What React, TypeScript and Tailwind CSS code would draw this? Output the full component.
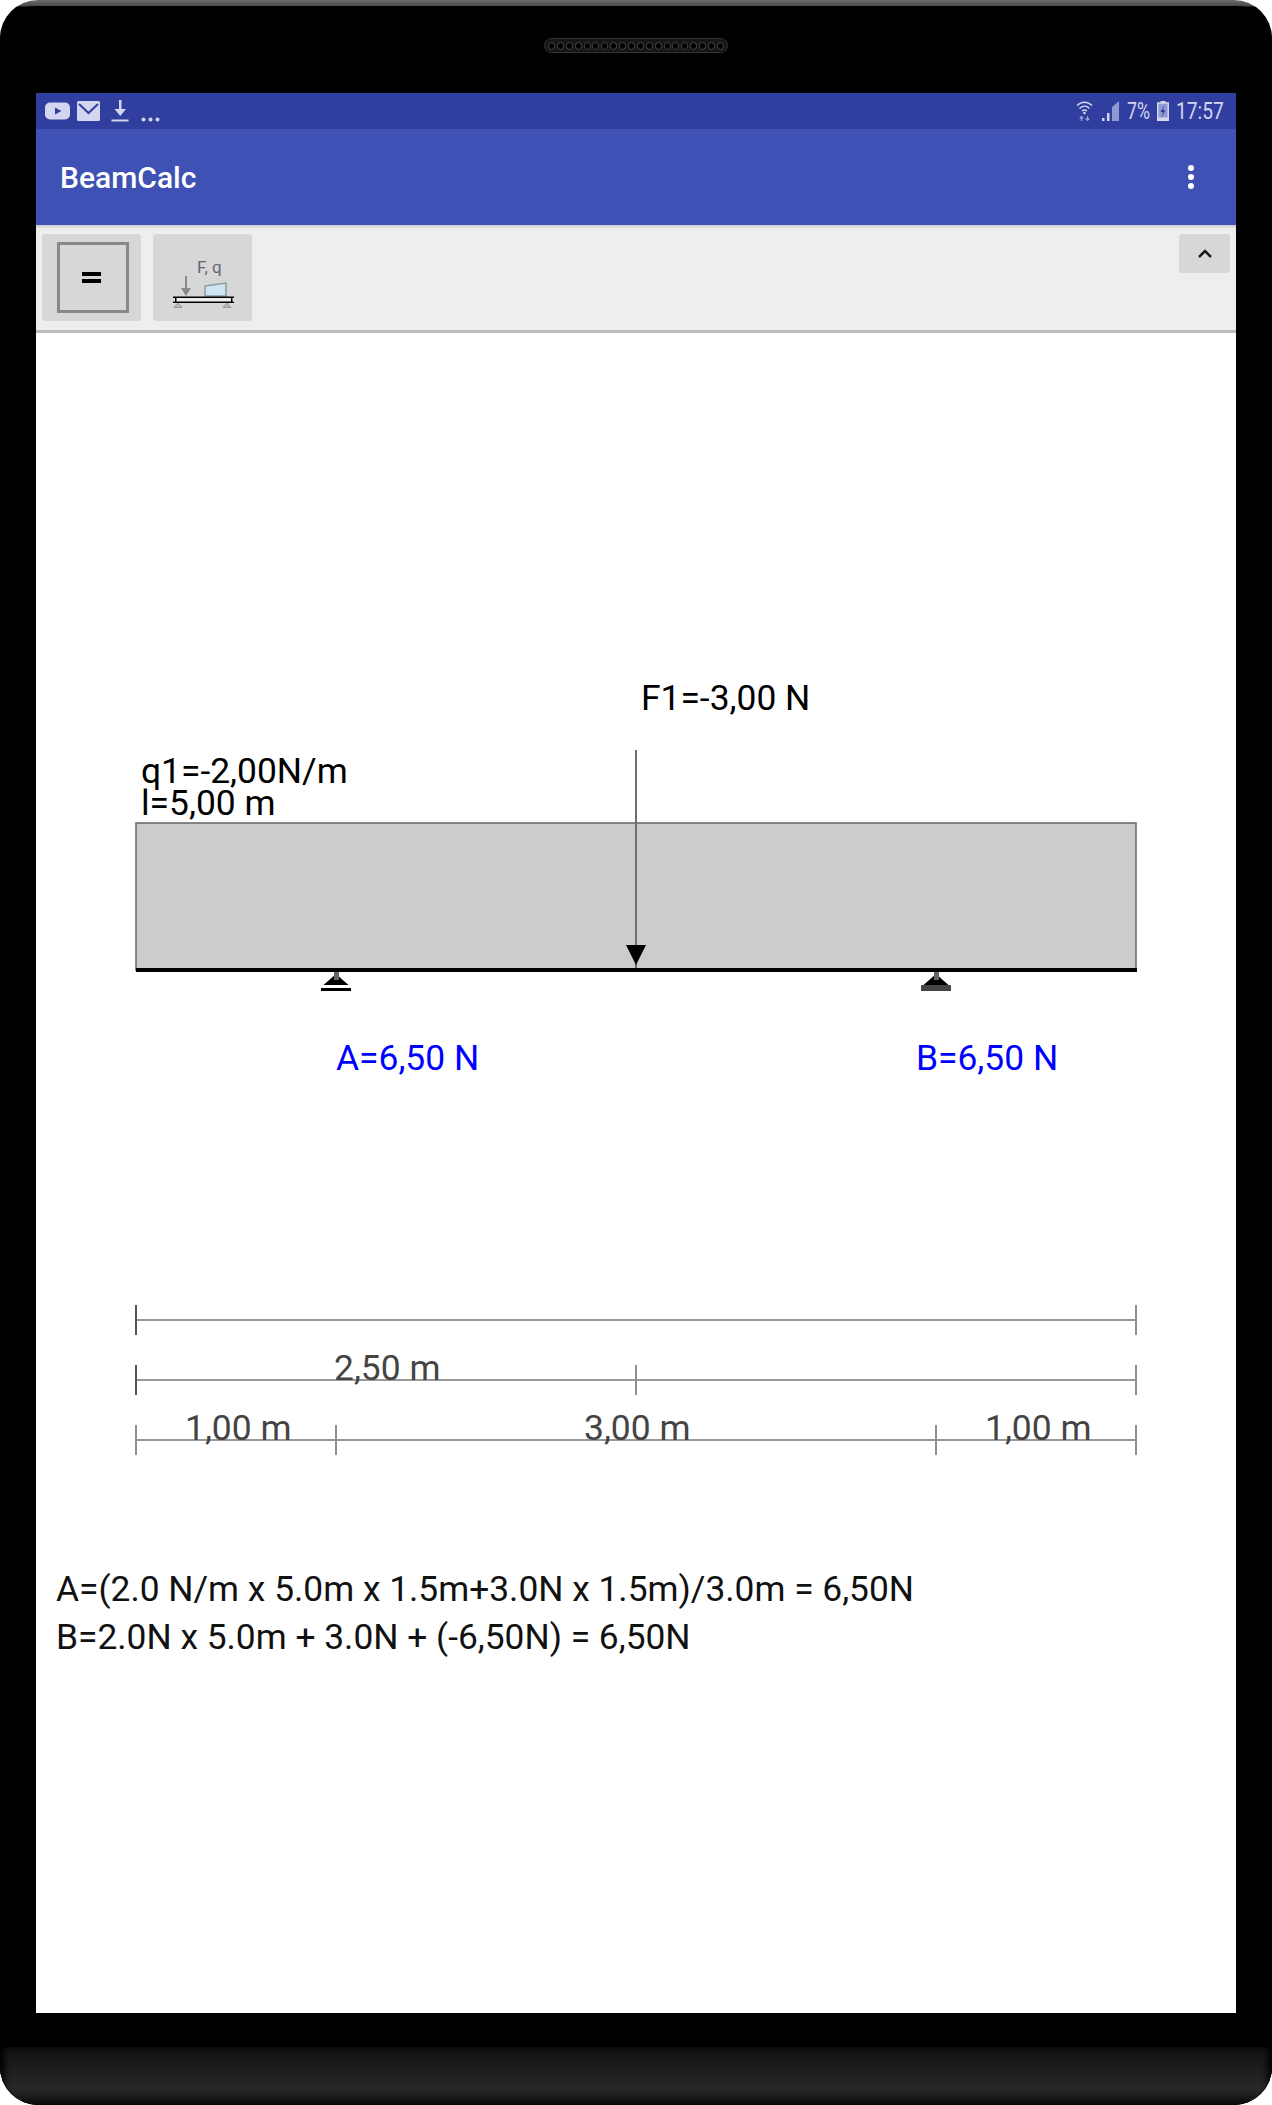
import React from "react";

const Dim = ({ y, ticks, dark = false }: { y: number; ticks: number[]; dark?: boolean }) => (
  <g>
    <line x1={136} x2={1136} y1={y} y2={y} stroke="#999999" strokeWidth={2} />
    {ticks.map((x, i) => (
      <line key={x} x1={x} x2={x} y1={y - 15} y2={y + 15} stroke={dark && i === 0 ? "#555555" : "#8f8f8f"} strokeWidth={2} />
    ))}
  </g>
);

const T = ({ x, y, fill, children }: { x: number; y: number; fill: string; children: string }) => (
  <text x={x} y={y} fill={fill} className="font-['Roboto'] text-[35.4px]">
    {children}
  </text>
);

function Diagram() {
  return (
    <svg viewBox="36 333 1200 1232" className="block w-[1200px] h-[1232px]">
      <rect x={136} y={823} width={1000} height={147} fill="#cccccc" stroke="#666666" strokeWidth={1.5} />
      <rect x={136} y={968} width={1001} height={4} fill="#000000" />
      <line x1={636} x2={636} y1={750} y2={968} stroke="#6e6e6e" strokeWidth={2} />
      <polygon points="626,945 646,945 636,965" fill="#000000" />

      <polygon points="323.5,985 348.5,985 336,974" fill="#000000" />
      <rect x={334} y={972} width={5} height={8} fill="#666666" />
      <rect x={321} y={988} width={30} height={3} fill="#000000" />

      <polygon points="923.5,985 948.5,985 936,974" fill="#000000" />
      <rect x={934} y={972} width={5} height={8} fill="#666666" />
      <rect x={921} y={985} width={30} height={6} fill="#444444" />

      <T x={641} y={710} fill="#000000">F1=-3,00 N</T>
      <T x={141} y={783} fill="#000000">q1=-2,00N/m</T>
      <T x={141} y={815} fill="#000000">l=5,00 m</T>
      <T x={336} y={1070} fill="#0000ff">A=6,50 N</T>
      <T x={916} y={1070} fill="#0000ff">B=6,50 N</T>

      <Dim y={1320} ticks={[136, 1136]} dark />
      <Dim y={1380} ticks={[136, 636, 1136]} dark />
      <Dim y={1440} ticks={[136, 336, 936, 1136]} />

      <T x={334} y={1380} fill="#444444">2,50 m</T>
      <T x={185} y={1440} fill="#444444">1,00 m</T>
      <T x={584} y={1440} fill="#444444">3,00 m</T>
      <T x={985} y={1440} fill="#444444">1,00 m</T>
    </svg>
  );
}

function StatusLeft() {
  return (
    <div className="flex items-center">
      <svg width="26" height="18" viewBox="0 0 26 18" className="ml-[9px]">
        <rect width="25" height="17" y="0.5" rx="5" fill="#d3d6ee" />
        <polygon points="10,5.5 10,12.5 16.5,9" fill="#303f9f" />
      </svg>
      <svg width="24" height="20" viewBox="0 0 24 20" className="ml-[6px]">
        <rect width="23" height="20" rx="1.5" fill="#d3d6ee" />
        <path d="M2 3l9.5 9L21 3" fill="none" stroke="#303f9f" strokeWidth="2" />
      </svg>
      <svg width="18" height="22" viewBox="0 0 18 22" className="ml-[10px]">
        <path d="M8 0h2.500v9h4.500L9.250 16 3.500 9H8z" fill="#d3d6ee" />
        <rect x="0.500" y="19.500" width="17" height="2" fill="#d3d6ee" />
      </svg>
      <svg width="19" height="5" viewBox="0 0 19 5" className="ml-[12px] mt-[16px]">
        <circle cx="2.500" cy="2.500" r="2" fill="#d3d6ee" />
        <circle cx="9.500" cy="2.500" r="2" fill="#d3d6ee" />
        <circle cx="16.500" cy="2.500" r="2" fill="#d3d6ee" />
      </svg>
    </div>
  );
}

function StatusRight() {
  return (
    <div className="flex items-center text-[#d3d6ee] font-['Roboto'] text-[24px] leading-none">
      <svg width="17" height="21" viewBox="0 0 17 21" className="-mt-[1px]">
        <g fill="none" stroke="#d3d6ee" strokeWidth="1.500">
          <path d="M1 5.500C5.500 1 11.500 1 16 5.500" />
          <path d="M3.500 8.500C6.500 5.500 10.500 5.500 13.500 8.500" />
          <path d="M6 11c1.500-1.300 3.500-1.300 5 0" />
        </g>
        <circle cx="8.500" cy="13" r="1.300" fill="#d3d6ee" />
        <path d="M5.500 21v-4M3.800 18.500l1.700-2 1.700 2M11.500 16v4M9.800 18.500l1.700 2 1.700-2" fill="none" stroke="#9aa2d6" strokeWidth="1.200" />
      </svg>
      <svg width="18" height="20" viewBox="0 0 18 20" className="ml-[8px]">
        <polygon points="18,0 18,20 11,20 11,6" fill="#8f98d2" />
        <rect x="1" y="17" width="2.500" height="3" fill="#d3d6ee" />
        <rect x="6" y="12" width="2.500" height="8" fill="#d3d6ee" />
      </svg>
      <span className="ml-[8px] w-[24px] whitespace-nowrap origin-left scale-x-[0.74]">7%</span>
      <svg width="12" height="20" viewBox="0 0 12 20" className="ml-[6px]">
        <rect x="0.750" y="2" width="10.500" height="17.500" fill="#8f98d2" stroke="#d3d6ee" strokeWidth="1.500" />
        <rect x="3.500" y="0" width="5" height="2" fill="#d3d6ee" />
        <rect x="0" y="16.500" width="12" height="3.500" fill="#d3d6ee" />
        <path d="M7.500 4L3.500 11h2.500L4.500 16 8.500 9H6z" fill="#303f9f" />
      </svg>
      <span className="ml-[7px] w-[48px] whitespace-nowrap origin-left scale-x-[0.8]">17:57</span>
    </div>
  );
}

function ForceIcon() {
  return (
    <svg width="99" height="87" viewBox="153 234 99 87">
      <text x={197} y={273} fill="#6b6478" className="font-['Roboto'] text-[17px]">F, q</text>
      <line x1={186} x2={186} y1={276} y2={292} stroke="#8a8a8a" strokeWidth={2} />
      <polygon points="181,288 191,288 186,296" fill="#8a8a8a" />
      <polygon points="205,286 226,283 226,296 205,296" fill="#cde4f5" stroke="#8f9aa0" strokeWidth={1.500} />
      <rect x={174} y={297} width={60} height={5} fill="#ededed" />
      <rect x={173} y={296.500} width={61} height={1.500} fill="#000000" />
      <rect x={173} y={301.500} width={61} height={1.500} fill="#000000" />
      <rect x={175} y={297} width={1.500} height={5} fill="#000000" />
      <rect x={231} y={297} width={1.500} height={5} fill="#000000" />
      <polygon points="178,303 174,307.500 182,307.500" fill="#b8b8b8" stroke="#999999" strokeWidth={1} />
      <polygon points="227,303 223,307.500 231,307.500" fill="#b8b8b8" stroke="#999999" strokeWidth={1} />
    </svg>
  );
}

export default function App() {
  return (
    <div className="relative w-[1272px] h-[2105px] overflow-hidden rounded-[38px] bg-[linear-gradient(to_bottom,#6a6a6a_0px,#4a4a4a_6px,#000000_7px)]">
      <div className="flex flex-col h-full">
        {/* top bezel */}
        <div className="h-[93px] shrink-0 flex justify-center pt-[38px] bg-black mt-[6px] -mb-[6px] rounded-t-[34px]">
          <div className="w-[184px] h-[15px] -mt-[6px] rounded-full bg-[#161616] border border-[#333333] flex items-center justify-between px-[3px]">
            {Array.from({ length: 20 }).map((_, i) => (
              <span key={i} className="w-[7px] h-[8px] rounded-full bg-black border border-[#4a4a4a]" />
            ))}
          </div>
        </div>

        {/* screen row */}
        <div className="h-[1920px] shrink-0 bg-black px-[36px]">
          <div className="h-full bg-white flex flex-col">
            <div className="h-[36px] shrink-0 bg-[#303f9f] flex items-center justify-between pr-[12px]">
              <StatusLeft />
              <StatusRight />
            </div>
            <div className="h-[96px] shrink-0 bg-[#3f51b5] flex items-center justify-between pl-[24px] pr-[42px]">
              <span className="font-['Roboto'] font-medium text-[30px] text-white">BeamCalc</span>
              <div className="flex flex-col gap-[3px]">
                <span className="w-[6px] h-[6px] rounded-full bg-white" />
                <span className="w-[6px] h-[6px] rounded-full bg-white" />
                <span className="w-[6px] h-[6px] rounded-full bg-white" />
              </div>
            </div>
            <div className="h-[108px] shrink-0 bg-[#eeeeee] border-b-[3px] border-[#bdbdbd] shadow-[inset_0_3px_3px_-1px_rgba(0,0,0,0.15)] flex items-start pt-[9px] pl-[6px] pr-[6px]">
              <div className="w-[99px] h-[87px] rounded-[3px] bg-[#d6d7d7] flex items-center pl-[15px]">
                <div className="w-[72px] h-[71px] border-[3px] border-[#888888] flex flex-col items-center justify-center gap-[3px]">
                  <span className="w-[19px] h-[4px] bg-black -ml-[3px]" />
                  <span className="w-[19px] h-[4px] bg-black -ml-[3px]" />
                </div>
              </div>
              <div className="ml-[12px] w-[99px] h-[87px] rounded-[3px] bg-[#d6d7d7]">
                <ForceIcon />
              </div>
              <div className="ml-auto w-[51px] h-[39px] rounded-[3px] bg-[#d6d7d7] flex items-center justify-center">
                <svg width="16" height="10" viewBox="0 0 16 10">
                  <path d="M2 8l6-6 6 6" fill="none" stroke="#1a1a1a" strokeWidth="2.500" />
                </svg>
              </div>
            </div>
            <Diagram />
            <div className="pl-[20px] font-['Roboto'] text-[35.35px] leading-[48px] text-[#111111]">
              <div>A=(2.0 N/m x 5.0m x 1.5m+3.0N x 1.5m)/3.0m = 6,50N</div>
              <div>B=2.0N x 5.0m + 3.0N + (-6,50N) = 6,50N</div>
            </div>
          </div>
        </div>

        {/* bottom bezel */}
        <div className="flex-1 flex flex-col bg-black">
          <div className="h-[34px] shrink-0" />
          <div className="flex-1 bg-[linear-gradient(to_bottom,#111111_0%,#1d1d1d_40%,#282828_72%,#111111_95%)] shadow-[inset_6px_0_6px_-2px_#000000,inset_-6px_0_6px_-2px_#000000]" />
        </div>
      </div>
    </div>
  );
}
